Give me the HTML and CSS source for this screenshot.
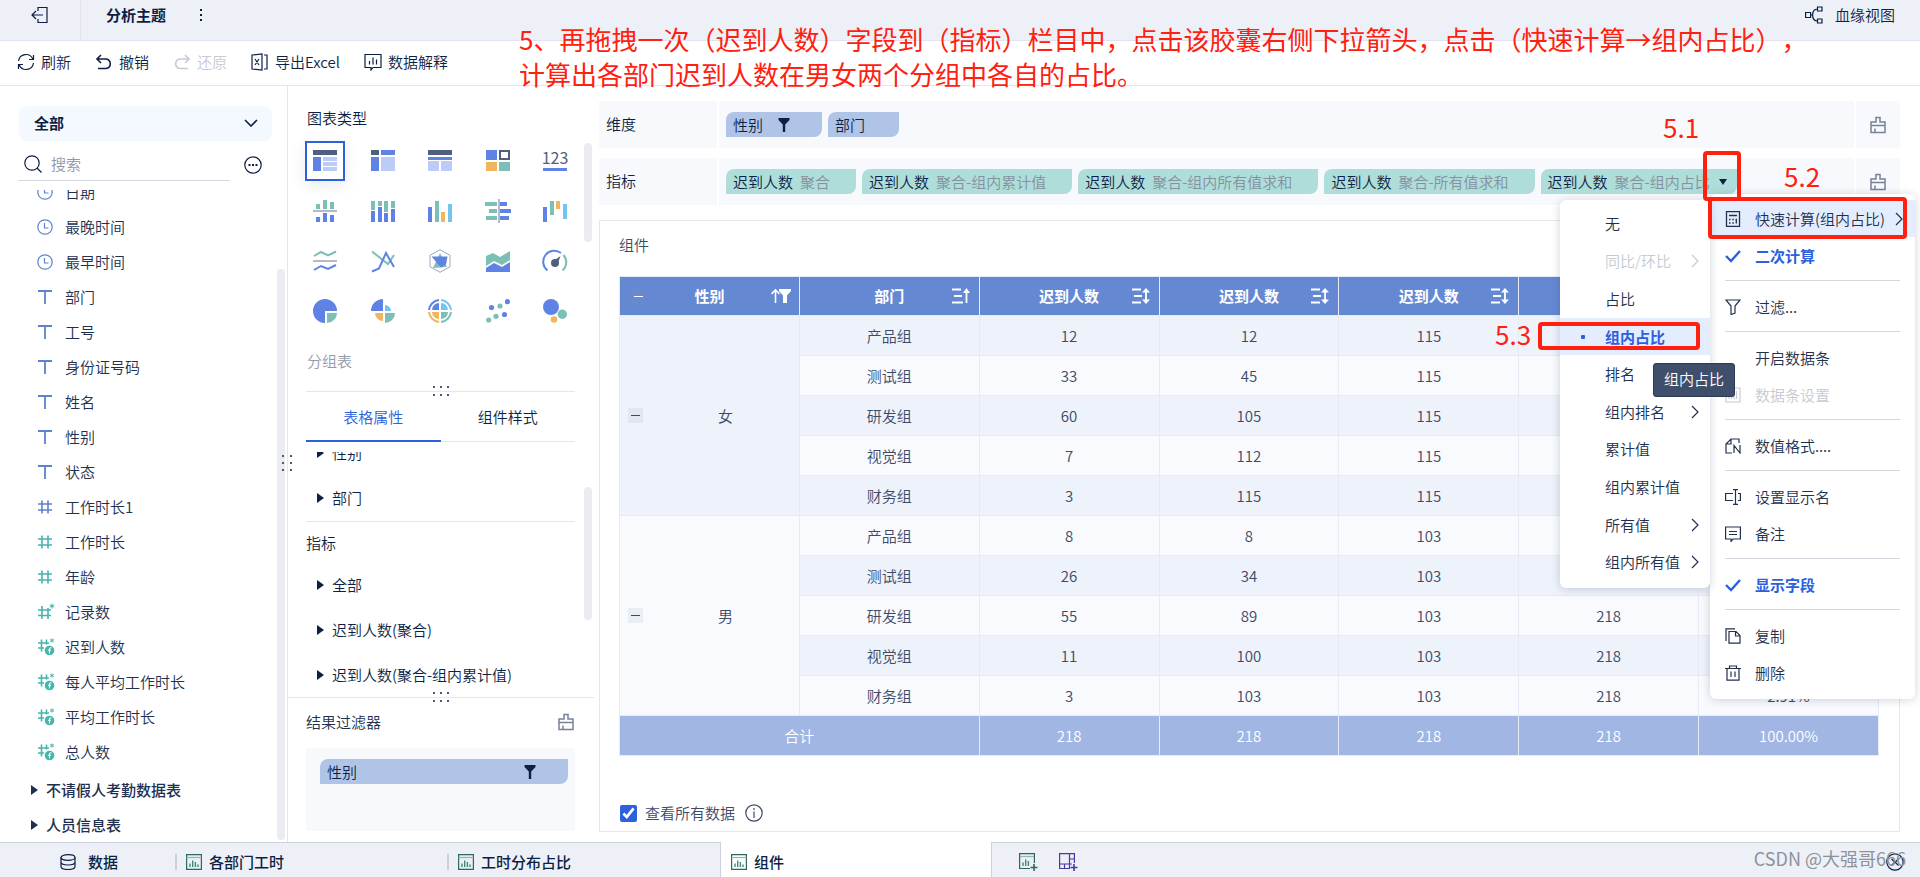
FILE: index.html
```html
<!DOCTYPE html>
<html lang="zh-CN">
<head>
<meta charset="utf-8">
<title>分析主题</title>
<meta name="viewport" content="width=device-width, initial-scale=1">
<link rel="stylesheet" href="styles.css">
</head>
<body>
<svg class="defs" aria-hidden="true">
  <symbol id="clock" viewBox="0 0 16 16"><circle cx="8" cy="8" r="7.2"/><path d="M7.5 4v5H11.500"/></symbol>
  <symbol id="text" viewBox="0 0 16 16"><path d="M1 2h14M8 2v13" stroke-width="1.8"/></symbol>
  <symbol id="num" viewBox="0 0 16 16"><path d="M1 5h14M1 11h14M5 1.500v13M11 1.500v13" stroke-width="1.6"/></symbol>
  <symbol id="numstar" viewBox="0 0 18 18"><path d="M1 7h13M1 12.500h13M5 3v13M11 5v11" stroke-width="1.600"/><path d="M15 .5v5M12.800 1.800l4.400 2.400M17.200 1.800l-4.400 2.400" stroke-width="1"/></symbol>
  <symbol id="numfn" viewBox="0 0 18 18"><path d="M1 5h11M1 10h6M4.500 1.500v12M9.500 1.500v5" stroke-width="1.600"/><path d="M15 .5v4M13.200 1.500l3.600 2M16.800 1.500l-3.600 2" stroke-width="1"/><circle cx="12.500" cy="12.500" r="4.800" fill="currentColor" stroke="none"/><path d="M14.500 9.800c-1.600-.4-2 .6-2 1.600v4M11 12.300h3" stroke="#fff" stroke-width="1.100"/></symbol>
  <symbol id="brush" viewBox="0 0 18 18"><path d="M2 16.500V6h5V1.500h4V6h5v10.500zM2 9.500h14M6 12.500v4" stroke-width="1.500"/></symbol>
  <symbol id="funnel" viewBox="0 0 12 14"><path d="M.5 0h11v2L7.200 6.500V14H4.800V6.500L.5 2z" fill="currentColor" stroke="none"/></symbol>
  <symbol id="sheet" viewBox="0 0 16 16"><path d="M.6.600h14.800v14.800H.6z" stroke="#2f665f"/><path d="M.6 3.500h14.800" stroke="#8fbab4"/><path d="M4 13V9.500M6.700 13V6.500M9.400 13V8M12 13v-2.500" stroke="#3f8a80" stroke-width="1.400"/></symbol>
  <symbol id="sort" viewBox="0 0 18 16"><path d="M0 1.500h9M2 8h8M0 14.500h9M14 2.500v11" stroke-width="1.800"/><path d="M14 0l4 4.500h-8zM14 16l4-4.500h-8z" fill="currentColor" stroke="none"/></symbol>
  <symbol id="sortup" viewBox="0 0 18 16"><path d="M0 1.500h9M2 8h8M0 14.500h11M14.500 2.500V15" stroke-width="1.800"/><path d="M14.500 0l3.500 5h-7z" fill="currentColor" stroke="none"/></symbol>
  <symbol id="next" viewBox="0 0 8 14"><path d="M1 1l6 6-6 6"/></symbol>
  <symbol id="check" viewBox="0 0 16 16"><path d="M1 8l5 5 9-10" stroke-width="2.400"/></symbol>
  <symbol id="tri" viewBox="0 0 7 10"><path d="M0 0l7 5-7 5z" fill="currentColor" stroke="none"/></symbol>
</svg>

<header class="topbar">
  <button class="exit" aria-label="退出"><svg class="i18" viewBox="0 0 18 18"><path d="M7 5V1.500h9v15H7V13M12 9H1M5 5L1 9l4 4"/></svg></button>
  <h1>分析主题</h1>
  <button class="more" aria-label="更多"><i></i><i></i><i></i></button>
  <button class="lineage"><svg class="i18" viewBox="0 0 18 18"><path d="M.6 6.500h5v5h-5zM12.500 1h4.500v4h-4.500zM12.500 13h4.500v4h-4.500zM5.600 9h2M12.500 3C9 3 7.600 6 7.600 9s1.400 6 4.900 6"/></svg>血缘视图</button>
</header>

<nav class="toolbar">
  <button><svg class="i18" viewBox="0 0 18 18"><path d="M1.500 8A7.500 7.500 0 0 1 15.800 6M16.500 10A7.500 7.500 0 0 1 2.200 12M16.500 2v4.500H12M1.500 16v-4.500H6"/></svg>刷新</button>
  <button><svg class="i18" viewBox="0 0 18 18"><path d="M6 2L2 6l4 4M2 6h9a5 4.800 0 0 1 0 9.500H3" stroke-width="1.600"/></svg>撤销</button>
  <button disabled><svg class="i18" viewBox="0 0 18 18"><path d="M12 2l4 4-4 4M16 6H7a5 4.800 0 0 0 0 9.500h8" stroke-width="1.600"/></svg>还原</button>
  <button><svg class="i18" viewBox="0 0 18 18"><path d="M1 2l10-1v16L1 16zM13 2h3v14h-3M4 6l4 6M8 6l-4 6"/></svg>导出Excel</button>
  <button><svg class="i18" viewBox="0 0 18 18"><path d="M1 1.500h16v13h-8L7 17v-2.500H1zM5.500 11.500V8M9 11.500v-7M12.500 11.500V6.500"/></svg>数据解释</button>
</nav>

<main class="workspace">
  <aside class="fields">
    <button class="scope">全部<svg width="14" height="8" viewBox="0 0 14 8"><path d="M1 1l6 6 6-6" stroke-width="1.600"/></svg></button>
    <div class="searchrow">
      <label class="search"><svg class="i18" viewBox="0 0 18 18"><circle cx="8" cy="8" r="7.200"/><path d="M13 13l4.500 4.500"/></svg><input type="text" placeholder="搜索" aria-label="搜索"></label>
      <button aria-label="更多选项"><svg class="i18" viewBox="0 0 18 18"><circle cx="9" cy="9" r="8.200"/><path d="M4.500 9h2M8 9h2M11.500 9h2" stroke-width="1.800"/></svg></button>
    </div>
    <div class="fieldlist">
      <ul>
        <li class="blue"><svg class="i16"><use href="#clock"/></svg>日期</li>
        <li class="blue"><svg class="i16"><use href="#clock"/></svg>最晚时间</li>
        <li class="blue"><svg class="i16"><use href="#clock"/></svg>最早时间</li>
        <li class="blue"><svg class="i16"><use href="#text"/></svg>部门</li>
        <li class="blue"><svg class="i16"><use href="#text"/></svg>工号</li>
        <li class="blue"><svg class="i16"><use href="#text"/></svg>身份证号码</li>
        <li class="blue"><svg class="i16"><use href="#text"/></svg>姓名</li>
        <li class="blue"><svg class="i16"><use href="#text"/></svg>性别</li>
        <li class="blue"><svg class="i16"><use href="#text"/></svg>状态</li>
        <li class="blue"><svg class="i16"><use href="#num"/></svg>工作时长1</li>
        <li class="teal"><svg class="i16"><use href="#num"/></svg>工作时长</li>
        <li class="teal"><svg class="i16"><use href="#num"/></svg>年龄</li>
        <li class="teal"><svg class="i18"><use href="#numstar"/></svg>记录数</li>
        <li class="teal"><svg class="i18"><use href="#numfn"/></svg>迟到人数</li>
        <li class="teal"><svg class="i18"><use href="#numfn"/></svg>每人平均工作时长</li>
        <li class="teal"><svg class="i18"><use href="#numfn"/></svg>平均工作时长</li>
        <li class="teal"><svg class="i18"><use href="#numfn"/></svg>总人数</li>
      </ul>
      <ul class="tables">
        <li><svg class="tri"><use href="#tri"/></svg>不请假人考勤数据表</li>
        <li><svg class="tri"><use href="#tri"/></svg>人员信息表</li>
      </ul>
      <span class="thumb thumb-fields"></span>
    </div>
    <span class="grip grip-v"></span>
  </aside>

  <section class="config">
    <div class="charts">
      <h2>图表类型</h2>
      <div class="chartgrid">
        <button class="on" aria-label="分组表"><svg viewBox="0 0 24 24"><path class="d" d="M0 1h24v5H0z"/><path class="b" d="M0 8h8v14H0z"/><path class="l" d="M10 8h14v4H10zM10 13h14v4H10zM10 18h14v4H10z"/></svg></button>
        <button aria-label="交叉表"><svg viewBox="0 0 24 24"><path class="d" d="M0 1h8v5H0z"/><path class="b" d="M10 1h14v5H10zM0 8h8v14H0z"/><path class="l" d="M10 8h14v14H10z"/></svg></button>
        <button aria-label="明细表"><svg viewBox="0 0 24 24"><path class="d" d="M0 1h24v5H0z"/><path class="b" d="M0 8h24v3H0z"/><path class="l" d="M0 12h11v10H0zM13 12h11v10H13z"/></svg></button>
        <button aria-label="颜色表格"><svg viewBox="0 0 24 24"><path class="b" d="M0 1h11v10H0z"/><path class="s-d" d="M14 2h9v8h-9z"/><path class="o" d="M0 13h11v9H0z"/><path class="g" d="M13 13h11v9H13z"/></svg></button>
        <button aria-label="KPI指标卡"><svg viewBox="0 0 24 24"><text x="12" y="15" text-anchor="middle">123</text><path class="b" d="M0 19h24v3H0z"/></svg></button>

        <button aria-label="对比柱状图"><svg viewBox="0 0 24 24"><path class="g" d="M3 5h4v5H3zM10 1h4v9h-4zM17 3h4v7h-4z"/><path class="n" d="M0 11h24v2H0z"/><path class="b" d="M3 18h4v5H3zM10 14h4v9h-4zM17 16h4v7h-4z"/></svg></button>
        <button aria-label="堆积柱状图"><svg viewBox="0 0 24 24"><path class="g" d="M0 2h4v9H0zM7 2h4v5H7zM13 2h4v11h-4zM20 2h4v7h-4z"/><path class="b" d="M0 12h4v11H0zM7 8h4v15H7zM13 14h4v9h-4zM20 10h4v13h-4z"/></svg></button>
        <button aria-label="分区柱状图"><svg viewBox="0 0 24 24"><path class="b" d="M0 8h4v15H0z"/><path class="g" d="M7 2h4v21H7z"/><path class="o" d="M13 13h4v10h-4z"/><path class="k" d="M20 5h4v18h-4z"/></svg></button>
        <button aria-label="对比条形图"><svg viewBox="0 0 24 24"><path class="g" d="M-1 3h12v4H-1zM3 10h8v4H3zM0 17h11v4H0z"/><path class="n" d="M12 0h2v24h-2z"/><path class="b" d="M14 3h7v4h-7zM14 10h11v4H14zM14 17h9v4h-9z"/></svg></button>
        <button aria-label="瀑布图"><svg viewBox="0 0 24 24"><path class="b" d="M0 8h4v15H0z"/><path class="g" d="M7 2h4v14H7z"/><path class="o" d="M13 2h4v8h-4z"/><path class="k" d="M20 5h4v15h-4z"/></svg></button>

        <button aria-label="对比折线图"><svg viewBox="0 0 24 24"><path class="s-g" d="M1 7l7-4 7 3.500 8-4"/><path class="n" d="M0 11h24v2H0z"/><path class="s-b" d="M1 21l7-4 7 3 8-4"/></svg></button>
        <button aria-label="折线图"><svg viewBox="0 0 24 24"><path class="s-g" d="M1 2.500L17 15l6-9"/><path class="s-b" d="M1 22.500l7-3L15 4l8 14"/></svg></button>
        <button aria-label="雷达图"><svg viewBox="0 0 24 24"><path class="s-n" d="M12 .7l10 5.600v11.400l-10 5.600L2 17.700V6.300z"/><path class="g" d="M12 4l7 14-14 1z"/><path class="b" d="M3.500 7.500h16l-1.500 8-5 3z"/></svg></button>
        <button aria-label="面积图"><svg viewBox="0 0 24 24"><path class="g" d="M0 7l7-3 7 4 10-6v9l-8 5-8-4-8 5z"/><path class="b" d="M0 19l8-5 8 4 8-5v10H0z"/></svg></button>
        <button aria-label="仪表盘"><svg viewBox="0 0 24 24"><path class="s-b" d="M4.500 21.500A11 11 0 0 1 18 4"/><path class="s-g" d="M20.500 6a11 11 0 0 1-1 15.500"/><circle class="d" cx="12" cy="14" r="4"/><path class="d" d="M17.500 7l-3 8-4-3z"/></svg></button>

        <button aria-label="饼图"><svg viewBox="0 0 24 24"><path class="b" d="M12 12v12A12 12 0 1 1 24 12z"/><path class="g" d="M14 14h10a10 10 0 0 1-10 10z"/></svg></button>
        <button aria-label="玫瑰图"><svg viewBox="0 0 24 24"><path class="b" d="M12 12V0A12 12 0 0 0 0 12z"/><path class="k" d="M14 12V6a6 6 0 0 1 6 6z"/><path class="g" d="M14 14h10a10 10 0 0 1-10 10z"/><path class="o" d="M12 14v8a8 8 0 0 1-8-8z"/></svg></button>
        <button aria-label="多层饼图"><svg viewBox="0 0 24 24"><path class="s-b" d="M1 11A11 11 0 0 1 11 1"/><path class="s-k" d="M13 1a11 11 0 0 1 10 10"/><path class="s-g" d="M23 13a11 11 0 0 1-10 10"/><path class="s-o" d="M11 23A11 11 0 0 1 1 13"/><path class="b" d="M11 11V4a7 7 0 0 0-7 7z"/><path class="k" d="M13 11V4a7 7 0 0 1 7 7z"/><path class="g" d="M13 13h7a7 7 0 0 1-7 7z"/><path class="o" d="M11 13v7a7 7 0 0 1-7-7z"/></svg></button>
        <button aria-label="散点图"><svg viewBox="0 0 24 24"><g class="b"><circle cx="5.500" cy="8.500" r="2.600"/><circle cx="21.500" cy="2.700" r="2.600"/><circle cx="18.500" cy="15.500" r="2.600"/></g><g class="g"><circle cx="14" cy="7" r="2.600"/><circle cx="10" cy="17.300" r="2.600"/><circle cx="2.700" cy="21" r="2.600"/></g></svg></button>
        <button aria-label="聚合气泡图"><svg viewBox="0 0 24 24"><circle class="b" cx="8" cy="8" r="8"/><circle class="g" cx="19.300" cy="15.300" r="4.700"/><circle class="o" cx="11" cy="20.500" r="3.300"/></svg></button>
      </div>
      <p class="charttype">分组表</p>
      <span class="thumb thumb-charts"></span>
      <span class="grip grip-h"></span>
    </div>

    <div class="props">
      <div class="tabs" role="tablist">
        <button class="on" role="tab" aria-selected="true">表格属性</button>
        <button role="tab" aria-selected="false">组件样式</button>
      </div>
      <div class="proplist">
        <ul>
          <li><svg class="tri"><use href="#tri"/></svg>性别</li>
          <li><svg class="tri"><use href="#tri"/></svg>部门</li>
        </ul>
        <h3>指标</h3>
        <ul>
          <li><svg class="tri"><use href="#tri"/></svg>全部</li>
          <li><svg class="tri"><use href="#tri"/></svg>迟到人数(聚合)</li>
          <li><svg class="tri"><use href="#tri"/></svg>迟到人数(聚合-组内累计值)</li>
        </ul>
      </div>
      <span class="thumb thumb-props"></span>
      <span class="grip grip-h"></span>
    </div>

    <div class="filters">
      <div class="filterhead"><h2>结果过滤器</h2><button aria-label="清空"><svg class="i18"><use href="#brush"/></svg></button></div>
      <div class="filterbox"><button class="pill dim">性别<svg class="fn"><use href="#funnel"/></svg></button></div>
    </div>
  </section>

  <section class="board">
    <div class="shelf">
      <div class="shelfname">维度</div>
      <div class="pills">
        <button class="pill dim filtered">性别<svg class="fn"><use href="#funnel"/></svg></button>
        <button class="pill dim">部门</button>
      </div>
      <button class="clear" aria-label="清空维度"><svg class="i18"><use href="#brush"/></svg></button>
    </div>
    <div class="shelf">
      <div class="shelfname">指标</div>
      <div class="pills">
        <button class="pill">迟到人数<span>聚合</span></button>
        <button class="pill">迟到人数<span>聚合-组内累计值</span></button>
        <button class="pill">迟到人数<span>聚合-组内所有值求和</span></button>
        <button class="pill">迟到人数<span>聚合-所有值求和</span></button>
        <button class="pill open">迟到人数<span>聚合-组内占比</span><svg width="8" height="6" viewBox="0 0 8 6"><path d="M0 0h8L4 6z" fill="currentColor" stroke="none"/></svg></button>
      </div>
      <button class="clear" aria-label="清空指标"><svg class="i18"><use href="#brush"/></svg></button>
    </div>

    <article class="card">
      <h2>组件</h2>
      <table>
        <thead>
          <tr>
            <th><div class="th"><button class="fold" aria-label="收起"></button>性别<svg width="20" height="16" viewBox="0 0 20 16"><path d="M4.500 15V2M.5 6l4-4 4 4" stroke-width="1.600"/><path d="M8 1h12v2l-4 4.500V15h-4V7.500L8 3z" fill="currentColor" stroke="none"/></svg></div></th>
            <th><div class="th"><i></i>部门<svg class="so"><use href="#sortup"/></svg></div></th>
            <th><div class="th"><i></i>迟到人数<svg class="so"><use href="#sort"/></svg></div></th>
            <th><div class="th"><i></i>迟到人数<svg class="so"><use href="#sort"/></svg></div></th>
            <th><div class="th"><i></i>迟到人数<svg class="so"><use href="#sort"/></svg></div></th>
            <th><div class="th"><i></i>迟到人数<svg class="so"><use href="#sort"/></svg></div></th>
            <th><div class="th"><i></i>迟到人数<svg class="so"><use href="#sort"/></svg></div></th>
          </tr>
        </thead>
        <tbody>
          <tr><td rowspan="5"><div class="group"><button class="fold" aria-label="收起"></button>女</div></td><td>产品组</td><td>12</td><td>12</td><td>115</td><td>218</td><td>10.43%</td></tr>
          <tr><td>测试组</td><td>33</td><td>45</td><td>115</td><td>218</td><td>28.70%</td></tr>
          <tr><td>研发组</td><td>60</td><td>105</td><td>115</td><td>218</td><td>52.17%</td></tr>
          <tr><td>视觉组</td><td>7</td><td>112</td><td>115</td><td>218</td><td>6.09%</td></tr>
          <tr><td>财务组</td><td>3</td><td>115</td><td>115</td><td>218</td><td>2.61%</td></tr>
          <tr><td rowspan="5"><div class="group"><button class="fold" aria-label="收起"></button>男</div></td><td>产品组</td><td>8</td><td>8</td><td>103</td><td>218</td><td>7.77%</td></tr>
          <tr><td>测试组</td><td>26</td><td>34</td><td>103</td><td>218</td><td>25.24%</td></tr>
          <tr><td>研发组</td><td>55</td><td>89</td><td>103</td><td>218</td><td>53.40%</td></tr>
          <tr><td>视觉组</td><td>11</td><td>100</td><td>103</td><td>218</td><td>10.68%</td></tr>
          <tr><td>财务组</td><td>3</td><td>103</td><td>103</td><td>218</td><td>2.91%</td></tr>
        </tbody>
        <tfoot>
          <tr><td colspan="2">合计</td><td>218</td><td>218</td><td>218</td><td>218</td><td>100.00%</td></tr>
        </tfoot>
      </table>
      <div class="viewall">
        <label><input type="checkbox" checked>查看所有数据</label>
        <svg class="i18" viewBox="0 0 18 18"><circle cx="9" cy="9" r="8.200"/><path d="M9 7.500V14M9 4v2"/></svg>
      </div>
    </article>
  </section>
</main>

<footer class="sheets">
  <button class="data"><svg class="i16" viewBox="0 0 16 16"><ellipse cx="8" cy="3.500" rx="7" ry="2.800"/><path d="M1 3.500v9c0 4 14 4 14 0v-9M1 8c0 4 14 4 14 0"/></svg>数据</button>
  <button><svg class="i16"><use href="#sheet"/></svg>各部门工时</button>
  <button><svg class="i16"><use href="#sheet"/></svg>工时分布占比</button>
  <button class="on"><svg class="i16"><use href="#sheet"/></svg>组件</button>
  <div class="adds">
    <button aria-label="添加组件"><svg width="20" height="20" viewBox="0 0 20 20"><path d="M12 16.500H1.600V1.600h14.800V11" stroke="#2f665f"/><path d="M2 4.500h14" stroke="#8fbab4"/><path d="M5 14v-3.500M7.700 14V7.500M10.400 14V9" stroke="#3f8a80" stroke-width="1.400"/><path d="M16 12v7M12.500 15.500h7" stroke="#2f665f" stroke-width="1.600"/></svg></button>
    <button aria-label="添加仪表板"><svg width="20" height="20" viewBox="0 0 20 20"><path d="M12 16.500H1.600V1.600h14.800V11M1.600 12H14M11.500 1.600V12M6.500 12v4.500M11.500 12v4.500M11.500 7h5" stroke="#473aa0"/><path d="M16 12v7M12.500 15.500h7" stroke="#473aa0" stroke-width="1.600"/></svg></button>
  </div>
  <button class="collapse" aria-label="收起"><svg class="i18" viewBox="0 0 18 18"><circle cx="9" cy="9" r="8.200"/><path d="M5.500 6L9 9.500 12.500 6M5.500 12.500L9 9l3.500 3.500"/></svg></button>
</footer>

<ul class="menu main-menu">
  <li class="on"><svg class="i16" viewBox="0 0 16 16"><path d="M1.500.600h13v14.800h-13zM4 4.500h8M4 8.500h1.500M7.300 8.500h1.500M10.500 8.500H12M4 12h1.500M7.300 12h1.500M11.300 8v4.500" stroke-width="1.300"/></svg><span>快速计算(组内占比)</span><svg class="next"><use href="#next"/></svg></li>
  <li class="picked"><svg class="i16"><use href="#check"/></svg><span>二次计算</span></li>
  <li class="sep"></li>
  <li><svg class="i16" viewBox="0 0 16 16"><path d="M1 1h14L10 7v7l-4 1.500V7z"/></svg><span>过滤...</span></li>
  <li class="sep"></li>
  <li><i class="i16"></i><span>开启数据条</span></li>
  <li class="off"><svg class="i16" viewBox="0 0 16 16"><path d="M1 1h14v14H1zM4 4v8M6.500 4v8M9 4v8M11.500 4v8"/></svg><span>数据条设置</span></li>
  <li class="sep"></li>
  <li><svg class="i16" viewBox="0 0 16 16"><path d="M7 15H1V6l5-5h8v4M6 1v5H1M9 15V7.500l6 7.500V7"/></svg><span>数值格式....</span></li>
  <li class="sep"></li>
  <li><svg class="i16" viewBox="0 0 16 16"><path d="M8 11.500H.6v-7H8M13 4.500h2.400v7H13M8 .600h5M8 15.400h5M10.500.600v14.800"/></svg><span>设置显示名</span></li>
  <li><svg class="i16" viewBox="0 0 16 16"><path d="M.6 1h14.800v12H8l-2 2.400V13H.6zM4 5.500h8M4 8.500h8"/></svg><span>备注</span></li>
  <li class="sep"></li>
  <li class="picked"><svg class="i16"><use href="#check"/></svg><span>显示字段</span></li>
  <li class="sep"></li>
  <li><svg class="i16" viewBox="0 0 16 16"><path d="M1 13V.800h9M4 3.500h7l4 4v7.700H4zM10.500 3.500V8H15"/></svg><span>复制</span></li>
  <li><svg class="i16" viewBox="0 0 16 16"><path d="M0 3.500h16M4.500 3.500V1h7v2.500M2 3.500v11.700h12V3.500M6 6.500V12M10 6.500V12"/></svg><span>删除</span></li>
</ul>

<ul class="menu sub-menu">
  <li>无</li>
  <li class="off">同比/环比<svg class="next"><use href="#next"/></svg></li>
  <li>占比</li>
  <li class="on picked">组内占比</li>
  <li>排名</li>
  <li>组内排名<svg class="next"><use href="#next"/></svg></li>
  <li>累计值</li>
  <li>组内累计值</li>
  <li>所有值<svg class="next"><use href="#next"/></svg></li>
  <li>组内所有值<svg class="next"><use href="#next"/></svg></li>
</ul>
<div class="tip" role="tooltip">组内占比</div>

<p class="note note-main">5、再拖拽一次（迟到人数）字段到（指标）栏目中，点击该胶囊右侧下拉箭头，点击（快速计算→组内占比），<br>计算出各部门迟到人数在男女两个分组中各自的占比。</p>
<p class="note note-1">5.1</p>
<p class="note note-2">5.2</p>
<p class="note note-3">5.3</p>
<span class="frame frame-1"></span>
<span class="frame frame-2"></span>
<span class="frame frame-3"></span>
<p class="mark">CSDN @大强哥666</p>
</body>
</html>
```

FILE: styles.css
```css
* { box-sizing: border-box; }
body {
  position: relative;
  margin: 0;
  height: 100vh;
  display: flex;
  flex-direction: column;
  overflow: hidden;
  background: #fff;
  color: #0d1f44;
  font: 350 15px/20px "Noto Sans CJK SC", sans-serif;
}
h1, h2, h3, p, ul { margin: 0; padding: 0; font-size: 15px; font-weight: inherit; }
ul { list-style: none; }
button { margin: 0; padding: 0; border: 0; background: none; color: inherit; font: inherit; cursor: pointer; }
svg { flex: none; fill: none; stroke: currentColor; stroke-width: 1.2; }
.defs { position: absolute; width: 0; height: 0; }
.i16 { width: 16px; height: 16px; }
.i18 { width: 18px; height: 18px; }
.tri { width: 7px; height: 10px; }
.fn { width: 12px; height: 14px; }
.so { width: 18px; height: 16px; }
.next { width: 8px; height: 14px; }

/* top bar */
.topbar { flex: none; height: 41px; display: flex; background: #edf0f6; border-bottom: 1px solid #e1e4ee; }
.topbar > * { padding-bottom: 10px; }
.topbar h1 { padding-top: 5px; margin-left: 25px; font-weight: 700; }
.exit { width: 81px; display: flex; justify-content: center; align-items: center; border-right: 1px solid #e1e4ee; }
.more { width: 20px; margin-left: 25px; display: flex; flex-direction: column; gap: 3px; align-items: center; justify-content: center; }
.more i { width: 2px; height: 2px; background: #0d1f44; }
.lineage { margin-left: auto; margin-right: 25px; display: flex; align-items: center; gap: 12px; }

/* toolbar */
.toolbar { flex: none; height: 45px; padding: 0 0 2px 17px; display: flex; gap: 24px; border-bottom: 1px solid #e4e5ef; }
.toolbar button { display: flex; align-items: center; gap: 6px; }
.toolbar button:disabled { color: #c6cad3; }

.workspace { flex: 1; min-height: 0; display: flex; }

/* field panel */
.fields { position: relative; flex: none; width: 288px; padding-top: 20px; display: flex; flex-direction: column; border-right: 1px solid #e4e5ef; }
.scope { margin: 0 15px 0 19px; height: 35px; padding: 0 14px 2px 15px; display: flex; align-items: center; justify-content: space-between; border-radius: 8px; background: #f4f9ff; font-weight: 700; }
.searchrow { display: flex; justify-content: space-between; margin: 8px 25px 0 18px; }
.search { width: 212px; height: 32px; padding: 0 0 2px 6px; display: flex; align-items: center; gap: 9px; border-bottom: 1px solid #d4d7e2; }
.search input { width: 100%; padding: 0; border: 0; outline: 0; background: none; font: inherit; }
.search input::placeholder { color: #8d96a8; opacity: 1; }
.searchrow button { height: 32px; display: flex; align-items: center; }
.fieldlist { position: relative; flex: 1; min-height: 0; margin-top: 9px; overflow: hidden; color: #22304f; }
.fieldlist ul:first-child { margin-top: -16px; }
.fieldlist li { height: 35px; padding-left: 37px; display: flex; align-items: center; gap: 12px; }
.fieldlist .i18 { margin-right: -2px; }
.blue svg { color: #5c82d0; }
.teal svg { color: #46b5ab; }
.fieldlist .tables { padding-top: 3px; }
.fieldlist .tables li { padding-left: 31px; gap: 8px; font-weight: 500; }
.thumb { position: absolute; width: 8px; border-radius: 4px; background: #ebecf1; }
.thumb-fields { top: 79px; bottom: 2px; right: 2px; }
.grip { position: absolute; background: radial-gradient(circle at 1px 1px, #4c5975 1px, transparent 1px); }
.grip-v { width: 10px; height: 16px; right: -5px; top: 369px; background-size: 8px 7px; }
.grip-h { width: 16px; height: 10px; left: 145px; bottom: -5px; background-size: 7px 8px; }

/* chart configuration */
.config { flex: none; width: 311px; display: flex; flex-direction: column; }
.charts { position: relative; height: 306px; margin: 0 24px 0 18px; padding-top: 22px; border-bottom: 1px solid #e4e5ef; }
.charts h2, .charttype { padding-left: 1px; }
.charts .grip-h { left: 127px; }
.chartgrid { margin: 13px 0 0 -1px; display: grid; grid-template-columns: repeat(5, 40px); grid-auto-rows: 40px; gap: 10px 0; justify-content: space-between; }
.chartgrid button { display: flex; align-items: center; justify-content: center; }
.chartgrid .on { border: 2px solid #2c60dd; box-shadow: 0 4px 16px #0d1f4418; }
.chartgrid svg { width: 24px; height: 24px; stroke: none; overflow: visible; }
.chartgrid text { font: 400 16px "Noto Sans CJK SC", sans-serif; fill: #4f5f80; }
.b { fill: #5f83e4; } .g { fill: #7bbfb6; } .o { fill: #efb55f; } .k { fill: #72c5f0; }
.d { fill: #4f5f80; } .l { fill: #bccbf7; } .n { fill: #b5bac8; }
.s-b, .s-g, .s-o, .s-k, .s-d, .s-n { stroke-width: 2; }
.s-b { stroke: #5f83e4; } .s-g { stroke: #7bbfb6; } .s-o { stroke: #efb55f; } .s-k { stroke: #72c5f0; } .s-d { stroke: #4f5f80; }
.s-n { stroke: #9da6ba; stroke-width: 1; }
.charttype { margin-top: 20px; color: #9299a8; }
.thumb-charts { top: 57px; height: 99px; right: -17px; }

.props { position: relative; flex: 1; min-height: 0; display: flex; flex-direction: column; border-bottom: 1px solid #e4e5ef; margin-right: 5px; }
.tabs { flex: none; height: 50px; margin: 0 19px 0 18px; display: grid; grid-template-columns: 1fr 1fr; border-bottom: 1px solid #e4e5ef; }
.tabs .on { color: #2c60dd; box-shadow: 0 1px #2c60dd, inset 0 -1px #2c60dd; }
.proplist { flex: 1; min-height: 0; margin: 10px 19px 0 18px; overflow: hidden; }
.proplist li { height: 45px; padding-left: 11px; display: flex; align-items: center; gap: 8px; }
.proplist ul:first-child { margin-top: -22px; padding-bottom: 1px; border-bottom: 1px solid #e4e5ef; }
.proplist h3 { padding: 11px 0 9px; }
.thumb-props { top: 95px; height: 133px; right: 2px; }

.filters { flex: none; height: 144px; padding: 13px 24px 11px 18px; display: flex; flex-direction: column; gap: 16px; }
.filterhead { display: flex; justify-content: space-between; align-items: center; height: 21px; color: #22304f; }
.filterhead button { height: 18px; color: #77819a; }
.filterbox { flex: 1; padding: 11px 7px 0 14px; background: #f8f9fd; }
.filterbox .pill { width: 100%; justify-content: space-between; padding-right: 32px; }

/* shelves */
.board { flex: 1; min-width: 0; padding: 15px 20px 10px 0; display: flex; flex-direction: column; }
.shelf { flex: none; height: 47px; margin-bottom: 10px; display: flex; gap: 2px; }
.shelf > * { background: #f8f9fd; }
.shelfname { width: 118px; padding: 13px 7px; }
.pills { flex: 1; min-width: 0; display: flex; gap: 6px; padding: 11px 7px; }
.pill { height: 25px; padding: 0 26px 0 7px; display: flex; align-items: center; gap: 7px; border-radius: 8px 0; background: #afdeda; white-space: nowrap; line-height: 25px; }
.pill span { color: #84919f; }
.dim { background: #b0c4e8; padding-right: 34px; }
.filtered { gap: 15px; padding-right: 32px; }
.open { gap: 7px; padding-right: 10px; }
.open svg { margin-left: 2px; }
.clear { width: 44px; display: flex; align-items: center; justify-content: center; color: #77819a; }

/* component card */
.card { flex: 1; min-height: 0; margin-top: 5px; padding: 14px 20px 8px 19px; display: flex; flex-direction: column; border: 1px solid #e6e7ee; color: #3d4a66; }
table { width: 100%; margin-top: 21px; table-layout: fixed; border-collapse: collapse; text-align: center; }
th, td { height: 40px; padding: 0; border: 1px solid #e5eaf5; font-weight: inherit; }
thead th { height: 39px; background: #6588d3; color: #fff; font-weight: 700; }
.th { display: grid; grid-template-columns: 20px 1fr 20px; align-items: center; justify-items: center; padding: 0 8px; }
tbody tr:nth-child(odd) td { background: #edf2fb; }
tbody tr:nth-child(even) td { background: #f8fafd; }
.group { display: grid; grid-template-columns: 24px 1fr; align-items: center; padding-left: 8px; }
.fold { width: 15px; height: 15px; background: linear-gradient(currentColor, currentColor) center / 9px 1px no-repeat #8296b81f; }
tfoot td { height: 40px; background: #a1b6e3; color: #fff; }
.viewall { margin-top: auto; display: flex; align-items: center; gap: 10px; }
.viewall label { display: flex; align-items: center; gap: 8px; }
.viewall input { width: 17px; height: 17px; margin: 0 0 0 1px; accent-color: #2c60dd; }

/* sheet tabs */
.sheets { flex: none; height: 35px; display: flex; background: #edf0f6; border-top: 1px solid #cdd0dc; font-weight: 500; }
.sheets > button { position: relative; width: 272px; padding: 4px 0 0 10px; display: flex; align-items: center; gap: 7px; border-left: 0; }
.sheets > button + button::before { content: ""; position: absolute; left: -1px; top: 11px; width: 2px; height: 16px; background: #cdd0dc; }
.sheets .data { width: 176px; padding-left: 60px; gap: 12px; }
.sheets .on { margin-top: -1px; background: #fff; border: solid #cdd0dc; border-width: 0 1px; }
.sheets > .on.on::before { display: none; }
.adds { flex: 1; padding: 4px 0 0 26px; display: flex; align-items: center; gap: 20px; }
.adds button { height: 20px; }
.sheets .collapse { width: 18px; margin-right: 16px; padding-left: 0; }

/* floating menus */
.menu { position: absolute; background: #fff; border-radius: 6px; box-shadow: 0 1px 10px #0d1f4430; color: #22304f; }
.menu .on { background: #e4edfe; }
.menu .picked { color: #2c60dd; font-weight: 700; }
.menu .off { color: #c6cad3; }
.main-menu { left: 1710px; top: 194px; width: 205px; padding: 6px 0 8px; }
.main-menu li { height: 37px; padding: 0 5px 0 15px; display: flex; align-items: center; gap: 14px; white-space: nowrap; }
.main-menu .next { margin-left: -4px; }
.main-menu .sep { height: 1px; margin: 6px 15px 7px; padding: 0; background: #d5d8e0; }
.sub-menu { left: 1560px; top: 200px; width: 150px; height: 388px; padding: 5px 0 7px; display: flex; flex-direction: column; }
.sub-menu li { position: relative; flex: 1; padding: 0 11px 0 45px; display: flex; align-items: center; justify-content: space-between; }
.sub-menu .picked::before { content: ""; position: absolute; left: 21px; width: 4px; height: 4px; border-radius: 1px; background: #2c60dd; }
.tip { position: absolute; left: 1653px; top: 363px; padding: 5px 10px 7px; border: 1px solid #2b3a55; border-radius: 3px; background: #3f4f6b; color: #fff; }

/* annotations */
.note { position: absolute; color: #ff2010; font-size: 26px; font-weight: 400; line-height: 35px; white-space: nowrap; text-spacing-trim: space-all; }
.note-main { left: 519px; top: 21px; }
.note-1 { left: 1663px; top: 109px; }
.note-2 { left: 1784px; top: 158px; }
.note-3 { left: 1495px; top: 316px; }
.frame { position: absolute; border: 4px solid #ff2010; border-radius: 4px; }
.frame-1 { left: 1703px; top: 151px; width: 38px; height: 50px; }
.frame-2 { left: 1708px; top: 197px; width: 199px; height: 42px; }
.frame-3 { left: 1538px; top: 322px; width: 162px; height: 28px; }
.mark { position: absolute; right: 14px; bottom: 9px; color: #8e929a; font-size: 18px; font-weight: 400; }
```
